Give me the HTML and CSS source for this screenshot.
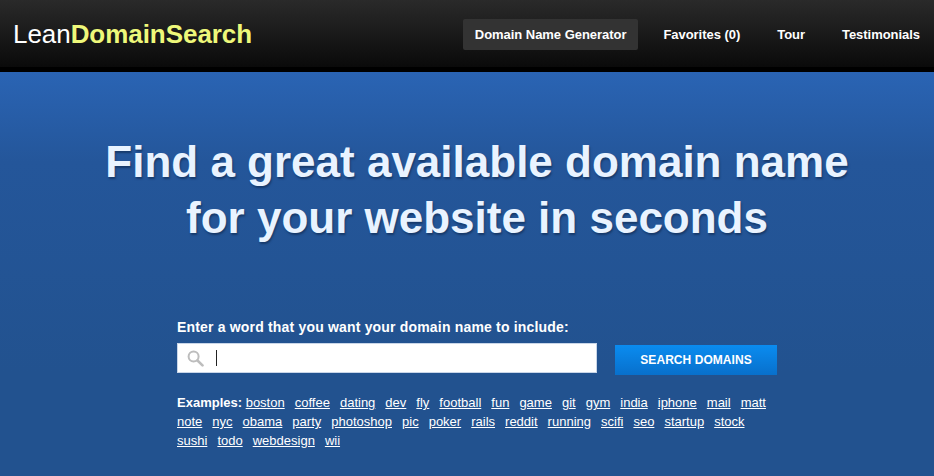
FILE: index.html
```html
<!DOCTYPE html>
<html>
<head>
    <meta charset="UTF-8" />
    <title>Lean Domain Search</title>
    <link rel="stylesheet" href="styles.css">
</head>
<body>
    <!-- top bar -->
    <header class="topbar">
        <a class="logo" href="#">Lean<strong>DomainSearch</strong></a>
        <nav class="nav">
            <a class="nav-link active" href="#">Domain Name Generator</a>
            <a class="nav-link" href="#">Favorites (0)</a>
            <a class="nav-link" href="#">Tour</a>
            <a class="nav-link" href="#">Testimonials</a>
        </nav>
    </header>

    <main class="hero">
        <h1 class="headline">Find a great available domain name<br>for your website in seconds</h1>

        <!-- search form -->
        <section class="search">
            <label class="search-label" for="word">Enter a word that you want your domain name to include:</label>
            <div class="search-row">
                <div class="search-box">
                    <svg class="search-icon" width="17" height="17" viewBox="0 0 17 17" fill="none" stroke="#bdbdbd">
                        <circle cx="6.6" cy="6.6" r="5" stroke-width="2"/>
                        <path d="M10.5 10.5l5 4.9" stroke-width="2.6" stroke-linecap="round"/>
                    </svg>
                    <span class="caret"></span>
                </div>
                <button class="search-button">SEARCH DOMAINS</button>
            </div>
            <p class="examples">
                <strong>Examples: </strong><a href="#">boston</a> <a href="#">coffee</a> <a href="#">dating</a> <a href="#">dev</a> <a href="#">fly</a> <a href="#">football</a> <a href="#">fun</a> <a href="#">game</a> <a href="#">git</a> <a href="#">gym</a> <a href="#">india</a> <a href="#">iphone</a> <a href="#">mail</a> <a href="#">matt</a>
                <a href="#">note</a> <a href="#">nyc</a> <a href="#">obama</a> <a href="#">party</a> <a href="#">photoshop</a> <a href="#">pic</a> <a href="#">poker</a> <a href="#">rails</a> <a href="#">reddit</a> <a href="#">running</a> <a href="#">scifi</a> <a href="#">seo</a> <a href="#">startup</a> <a href="#">stock</a>
                <a href="#">sushi</a> <a href="#">todo</a> <a href="#">webdesign</a> <a href="#">wii</a>
            </p>
        </section>
    </main>
</body>
</html>
```

FILE: styles.css
```css
html,
body {
  height: 100%;
}

body {
  margin: 0;
  overflow: hidden;
  font-family: "Liberation Sans", Arial, sans-serif;
  color: #ffffff;
  background-color: #22528f;
}

.topbar {
  display: flex;
  justify-content: space-between;
  align-items: center;
  box-sizing: border-box;
  height: 72px;
  padding: 0 2px 3px 13px;
  background: linear-gradient(#2a2a2a, #0a0a0a 67px, #000000 67px);
}

.logo {
  font-size: 26px;
  letter-spacing: -0.05px;
  color: #ffffff;
  text-decoration: none;
}

.logo strong {
  color: #eef87a;
}

.nav {
  display: flex;
  align-items: center;
  gap: 13px;
}

.nav-link {
  padding: 8px 12px;
  font-size: 13px;
  font-weight: bold;
  line-height: 15px;
  letter-spacing: -0.04px;
  color: #ffffff;
  text-decoration: none;
}

.nav-link.active {
  background-color: #333333;
  border-radius: 2px;
}

.hero {
  height: 404px;
  box-sizing: border-box;
  padding: 62px 0 0 20px;
  background: linear-gradient(#2a64b4, #24569a 90px, #22528f 300px);
}

.headline {
  margin: 0;
  font-size: 44px;
  line-height: 56px;
  text-align: center;
  color: #e9f3ff;
  text-shadow: 1px 2px 2px #173a6b;
}

.search {
  width: 600px;
  margin: 73px 0 0 157px;
}

.search-label {
  display: block;
  font-size: 14px;
  font-weight: bold;
  line-height: 16px;
  letter-spacing: 0.18px;
}

.search-row {
  display: flex;
  align-items: flex-start;
  gap: 18px;
  margin-top: 8px;
}

.search-box {
  display: flex;
  align-items: center;
  box-sizing: border-box;
  width: 420px;
  height: 30px;
  padding-left: 9px;
  background-color: #ffffff;
  border: 1px solid #c9d6e8;
}

.search-icon {
  flex: none;
}

.caret {
  width: 1px;
  height: 16px;
  margin-left: 12px;
  background-color: #222222;
}

.search-button {
  width: 162px;
  height: 30px;
  margin-top: 2px;
  padding: 0;
  font-family: inherit;
  font-size: 12px;
  font-weight: bold;
  letter-spacing: 0.05px;
  color: #ffffff;
  background: linear-gradient(#0a8cf0, #0870cc);
  border: none;
}

.examples {
  width: 600px;
  margin: 18px 0 0;
  font-size: 13px;
  line-height: 19px;
  word-spacing: 6.4px;
}

.examples strong {
  word-spacing: normal;
}

.examples a {
  color: #ffffff;
}
```
